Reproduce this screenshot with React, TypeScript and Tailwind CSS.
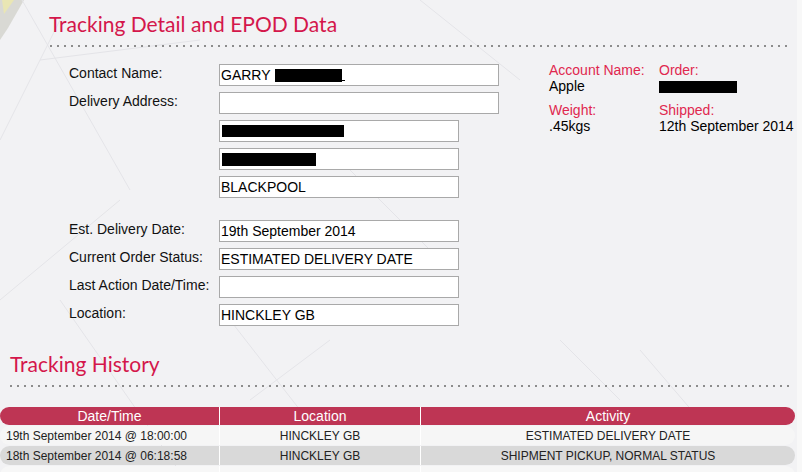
import React from 'react';

const Box: React.FC<{ className: string; children?: React.ReactNode }> = ({ className, children }) => (
    <div className={`h-[22px] border border-[#a9a9a9] bg-white flex items-center pl-[1px] whitespace-nowrap ${className}`}>
        {children}
    </div>
);

const Row: React.FC<{ label?: string; wide?: boolean; children?: React.ReactNode }> = ({ label, wide, children }) => (
    <div className="flex items-start">
        <div className="w-[150px] pt-[1px] text-[#111]">{label}</div>
        <Box className={wide ? 'w-[280px]' : 'w-[240px]'}>{children}</Box>
    </div>
);

const Redact: React.FC<{ className: string }> = ({ className }) => <span className={`inline-block bg-black ${className}`} />;

const history = [
    { date: '19th September 2014 @ 18:00:00', location: 'HINCKLEY GB', activity: 'ESTIMATED DELIVERY DATE', bg: 'bg-[#f6f6f6]' },
    { date: '18th September 2014 @ 06:18:58', location: 'HINCKLEY GB', activity: 'SHIPMENT PICKUP, NORMAL STATUS', bg: 'bg-[#d9d9d9]' },
    { date: '', location: '', activity: '', bg: 'bg-[#f7f7f7]' },
];

const Dots: React.FC<{ className: string }> = ({ className }) => (
    <div className={`h-[2px] bg-[linear-gradient(to_right,#8c8c8c_2px,transparent_2px)] bg-[length:7px_2px] bg-repeat-x ${className}`} />
);

export default function App() {
    return (
        <div className="relative w-[802px] h-[472px] overflow-hidden bg-[#f2f2f4] font-['Liberation_Sans',Arial,sans-serif] text-[14px] leading-[16px] text-black">
            {/* faint background artwork */}
            <svg className="absolute inset-0" width="802" height="472" viewBox="0 0 802 472" fill="none">
                <polygon points="0,0 24,0 8,28 0,40" fill="#d9d9d4" />
                <polygon points="2,0 14,0 4,14" fill="#e9e6b4" />
                <g stroke="#e4e4e8" strokeWidth="1">
                    <line x1="22" y1="0" x2="130" y2="190" />
                    <line x1="0" y1="140" x2="60" y2="20" />
                    <line x1="40" y1="60" x2="200" y2="40" />
                    <line x1="0" y1="300" x2="120" y2="200" />
                    <line x1="60" y1="300" x2="180" y2="472" />
                    <line x1="230" y1="320" x2="300" y2="410" />
                    <line x1="250" y1="400" x2="330" y2="340" />
                    <line x1="330" y1="150" x2="440" y2="260" />
                    <line x1="560" y1="340" x2="620" y2="400" />
                    <line x1="640" y1="350" x2="700" y2="420" />
                    <line x1="420" y1="0" x2="520" y2="80" />
                </g>
                <rect x="797" y="0" width="5" height="472" fill="#f8f8f8" />
            </svg>

            <div className="relative">
                <h1 className="pt-[12px] pl-[49px] font-['Lato',sans-serif] text-[21px] leading-[24px] text-[#d4174b]">
                    Tracking Detail and EPOD Data
                </h1>
                <Dots className="mt-[9px] ml-[50px] w-[740px]" />

                <div className="mt-[15px] pl-[69px] flex items-start">
                    <div className="pt-[2px] flex flex-col gap-[6px]">
                        <Row label="Contact Name:" wide>
                            GARRY&nbsp;<Redact className="w-[67px] h-[13px] ml-[1px]" />
                            <span className="inline-block w-[3px] h-[1px] bg-black mt-[11px]" />
                        </Row>
                        <Row label="Delivery Address:" wide />
                        <Row>
                            <Redact className="w-[122px] h-[12px] ml-[1px]" />
                        </Row>
                        <Row>
                            <Redact className="w-[94px] h-[13px] ml-[1px]" />
                        </Row>
                        <Row>BLACKPOOL</Row>
                        <div className="h-[10px]" />
                        <Row label="Est. Delivery Date:">19th September 2014</Row>
                        <Row label="Current Order Status:">ESTIMATED DELIVERY DATE</Row>
                        <Row label="Last Action Date/Time:" />
                        <Row label="Location:">HINCKLEY GB</Row>
                    </div>

                    <div className="ml-[50px] grid grid-cols-[110px_auto] gap-y-[8px]">
                        <div>
                            <div className="text-[#e0284f]">Account Name:</div>
                            <div>Apple</div>
                        </div>
                        <div>
                            <div className="text-[#e0284f]">Order:</div>
                            <div className="h-[16px] pt-[2px]">
                                <Redact className="w-[78px] h-[12px]" />
                            </div>
                        </div>
                        <div>
                            <div className="text-[#e0284f]">Weight:</div>
                            <div>.45kgs</div>
                        </div>
                        <div>
                            <div className="text-[#e0284f]">Shipped:</div>
                            <div>12th September 2014</div>
                        </div>
                    </div>
                </div>

                <h2 className="mt-[26px] pl-[10px] font-['Lato',sans-serif] text-[21px] leading-[24px] text-[#d4174b]">
                    Tracking History
                </h2>
                <Dots className="mt-[9px] ml-[10px] w-[780px]" />

                <div className="mt-[20px] w-[795px] flex flex-col">
                    <div className="flex h-[18px] rounded-full overflow-hidden bg-[#be3554] text-white">
                        <div className="w-[219px] flex items-center justify-center">Date/Time</div>
                        <div className="w-[201px] border-l border-white flex items-center justify-center">Location</div>
                        <div className="flex-1 border-l border-white flex items-center justify-center">Activity</div>
                    </div>
                    {history.map((h, i) => (
                        <div key={i} className={`flex h-[19px] mt-[1px] rounded-full overflow-hidden text-[12px] leading-[14px] text-[#222] ${h.bg}`}>
                            <div className="w-[219px] flex items-center pl-[6px]">{h.date}</div>
                            <div className="w-[201px] border-l border-white flex items-center justify-center">{h.location}</div>
                            <div className="flex-1 border-l border-white flex items-center justify-center">{h.activity}</div>
                        </div>
                    ))}
                </div>
            </div>
        </div>
    );
}
